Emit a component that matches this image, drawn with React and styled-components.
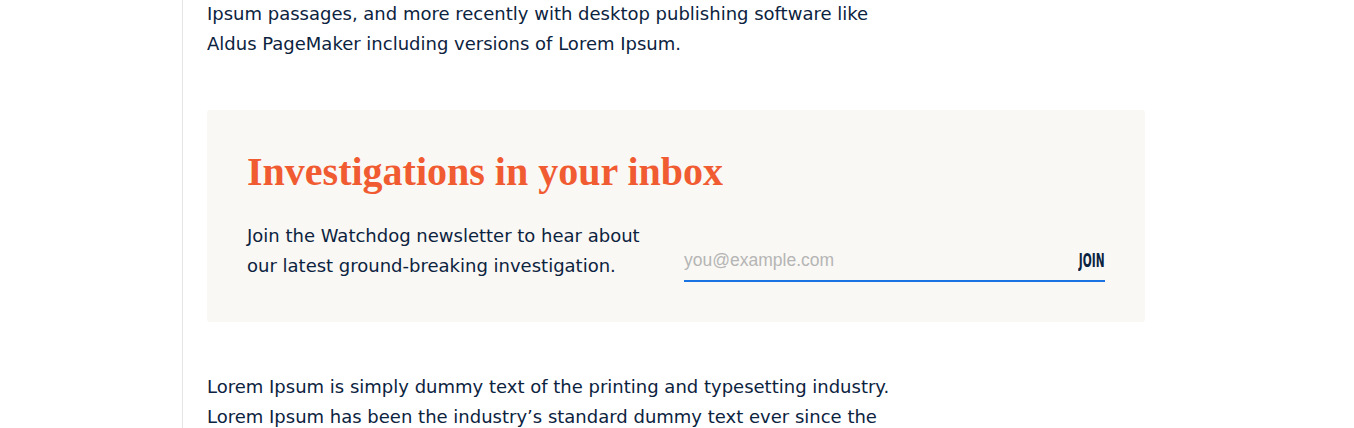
import styled, { createGlobalStyle } from "styled-components";

const GlobalStyle = createGlobalStyle`
  html, body {
    margin: 0;
    padding: 0;
    background: #ffffff;
  }
  body {
    font-family: "DejaVu Sans", "Liberation Sans", sans-serif;
    color: #0c2340;
  }
`;

const Page = styled.div`
  display: flex;
  height: 428px;
  overflow: hidden;
  padding-left: 182px;
`;

const Article = styled.main`
  flex: 1;
  border-left: 1px solid #e4e4e4;
  padding: 0 0 0 24px;
  margin-top: -1px;
`;

const Paragraph = styled.p`
  margin: 0;
  width: 700px;
  font-size: 18px;
  line-height: 30px;
  color: #0c2340;
`;

const Signup = styled.section`
  width: 858px;
  margin: 51px 0 50px;
  padding: 40px 40px 41px;
  background: #f9f8f4;
  border-radius: 3px;
`;

const Heading = styled.h2`
  margin: 0 0 28px;
  font-family: "Liberation Serif", "Times New Roman", serif;
  font-weight: 700;
  font-size: 40px;
  line-height: 43px;
  color: #f15b31;
`;

const Row = styled.div`
  display: grid;
  grid-template-columns: 1fr 1fr;
  gap: 16px;
  align-items: end;
`;

const Blurb = styled.p`
  margin: 0;
  font-size: 18px;
  line-height: 30px;
  color: #0c2340;
`;

const Field = styled.form`
  display: flex;
  align-items: center;
  height: 40px;
  border-bottom: 2px solid #1a73e3;
  margin-bottom: -1px;
`;

const EmailInput = styled.input`
  flex: 1;
  border: none;
  background: transparent;
  outline: none;
  padding: 0;
  font-family: "Liberation Sans", Arial, sans-serif;
  font-size: 17.5px;
  color: #0c2340;

  &::placeholder {
    color: #b5b5b5;
  }
`;

const JoinButton = styled.button`
  border: none;
  background: transparent;
  padding: 0;
  font-family: "DejaVu Sans Condensed", "DejaVu Sans", sans-serif;
  font-weight: 700;
  font-size: 19px;
  color: #0c2340;
  transform: scaleX(0.62);
  transform-origin: right center;
  cursor: pointer;
`;

export default function App() {
  return (
    <>
      <GlobalStyle />
      <Page>
        <Article>
          <Paragraph>
            Ipsum passages, and more recently with desktop publishing software
            like Aldus PageMaker including versions of Lorem Ipsum.
          </Paragraph>
          <Signup>
            <Heading>Investigations in your inbox</Heading>
            <Row>
              <Blurb>
                Join the Watchdog newsletter to hear about our latest
                ground-breaking investigation.
              </Blurb>
              <Field onSubmit={(e) => e.preventDefault()}>
                <EmailInput type="email" placeholder="you@example.com" />
                <JoinButton type="submit">JOIN</JoinButton>
              </Field>
            </Row>
          </Signup>
          <Paragraph>
            Lorem Ipsum is simply dummy text of the printing and typesetting
            industry. Lorem Ipsum has been the industry’s standard dummy text
            ever since the
          </Paragraph>
        </Article>
      </Page>
    </>
  );
}
